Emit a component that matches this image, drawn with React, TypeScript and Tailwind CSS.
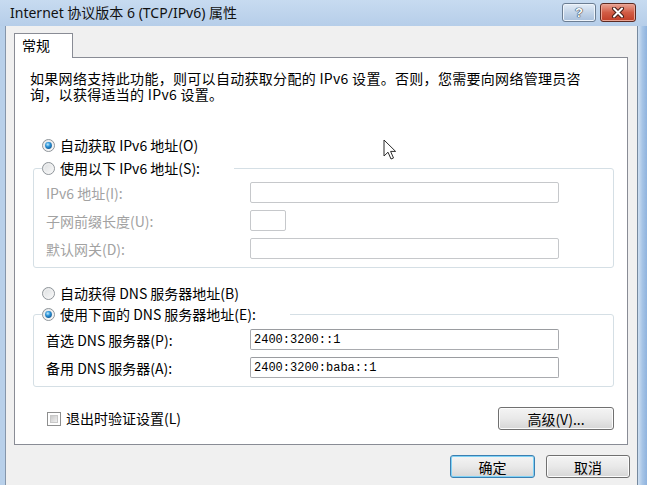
import React from "react";

function Radio({ checked }: { checked?: boolean }) {
  return (
    <svg width="13" height="13" viewBox="0 0 13 13" className="shrink-0">
      <defs>
        <linearGradient id="radio-bg" x1="0" y1="0" x2="1" y2="1">
          <stop offset="0" stopColor="#d9dcde" />
          <stop offset="1" stopColor="#fbfbfb" />
        </linearGradient>
        <radialGradient id="radio-dot" cx="0.4" cy="0.35" r="0.75">
          <stop offset="0" stopColor="#c4ecfd" />
          <stop offset="0.45" stopColor="#2a93d8" />
          <stop offset="1" stopColor="#0d4f8a" />
        </radialGradient>
      </defs>
      <circle cx="6.5" cy="6.5" r="6" fill="url(#radio-bg)" stroke="#8e9499" />
      <circle cx="6.5" cy="6.5" r="4.6" fill="none" stroke="#f4f4f4" strokeWidth="0.8" />
      {checked && <circle cx="6.5" cy="6.5" r="3.4" fill="url(#radio-dot)" />}
    </svg>
  );
}

function Checkbox() {
  return (
    <div className="w-[14px] h-[14px] shrink-0 border border-[#8e8f8f] bg-white p-[2px]">
      <div className="w-full h-full border border-[#c8c8c8] bg-gradient-to-br from-[#cbcbcb] to-[#efefef]" />
    </div>
  );
}

function WinButton({ label, primary, className }: { label: string; primary?: boolean; className?: string }) {
  return (
    <div
      className={
        "h-[23px] flex items-center justify-center rounded-[3px] text-[14px] leading-none text-black bg-gradient-to-b from-[#f4f4f4] via-[#e9e9e9] to-[#d6d6d6] " +
        (primary
          ? "border border-[#3c7fb1] shadow-[inset_0_0_0_1px_#7fd2f6] "
          : "border border-[#707070] shadow-[inset_0_0_0_1px_#fcfcfc] ") +
        (className ?? "")
      }
    >
      {label}
    </div>
  );
}

function Field({ label, value, disabled }: { label: string; value?: string; disabled?: boolean }) {
  return (
    <div className="flex items-center h-[21px]">
      <span className={"w-[204px] text-[14px] leading-[16px] " + (disabled ? "text-[#a2a2a2]" : "text-black")}>
        {label}
      </span>
      <div
        className={
          "w-[309px] h-[21px] rounded-[2px] bg-white flex items-center pl-[3px] border " +
          (disabled ? "border-[#c6c8cb]" : "border-[#a9abaf] border-t-[#9a9ca0]")
        }
      >
        {value && (
          <span className="text-[12px] text-black [font-family:'Liberation_Mono',monospace]">{value}</span>
        )}
      </div>
    </div>
  );
}

function ShortField({ label }: { label: string }) {
  return (
    <div className="flex items-center h-[21px]">
      <span className="w-[204px] text-[14px] leading-[16px] text-[#a2a2a2]">{label}</span>
      <div className="w-[36px] h-[21px] rounded-[2px] bg-white border border-[#c6c8cb]" />
    </div>
  );
}

export default function App() {
  return (
    <div className="relative w-[647px] h-[485px] overflow-hidden bg-[#f0f0f0] flex flex-col [font-family:'Noto_Sans_CJK_SC',sans-serif]">
      {/* title bar */}
      <div className="h-[26px] shrink-0 flex justify-between bg-gradient-to-b from-[#c7dbf0] to-[#b6cee9] pl-[10px] pr-[11px]">
        <span className="self-center text-[14px] leading-none text-[#111] [font-family:'Noto_Sans','Noto_Sans_CJK_SC',sans-serif]">
          Internet 协议版本 6 (TCP/IPv6) 属性
        </span>
        <div className="flex gap-[4px] mt-[3px]">
          <div className="w-[34px] h-[19px] rounded-[3px] border border-[#6b7d92] bg-gradient-to-b from-[#e4edf7] via-[#c3d4e8] to-[#a9c0dc] flex items-center justify-center shadow-[inset_0_0_0_1px_#eef4fb]">
            <span className="text-[13px] font-bold leading-none text-white [font-family:'Liberation_Sans',sans-serif] [text-shadow:0_0_1px_#2a3a4c,0_0_1px_#2a3a4c,0_0_1px_#2a3a4c]">
              ?
            </span>
          </div>
          <div className="w-[36px] h-[19px] rounded-[3px] border border-[#5c2a22] bg-gradient-to-b from-[#e8a395] via-[#d25c45] to-[#c13d26] flex items-center justify-center shadow-[inset_0_0_0_1px_#eba595]">
            <svg width="14" height="11" viewBox="0 0 14 11">
              <path d="M3 1.5 L11 9.5 M11 1.5 L3 9.5" stroke="#4a2019" strokeWidth="4" strokeLinecap="round" />
              <path d="M3 1.5 L11 9.5 M11 1.5 L3 9.5" stroke="#ffffff" strokeWidth="2" strokeLinecap="round" />
            </svg>
          </div>
        </div>
      </div>

      <div className="flex-1 flex">
        {/* left frame */}
        <div className="w-[6px] bg-[#b8d0ea] border-r border-[#8596ab]" />

        <div className="flex-1 flex flex-col pt-[7px] pl-[8px] pr-[9px]">
          {/* tab strip */}
          <div className="flex">
            <div className="relative z-10 -mb-px w-[59px] h-[25px] bg-white border border-b-0 border-[#898c95] pl-[7px] pt-[3px] text-[14px] leading-[16px] text-black">
              常规
            </div>
          </div>

          {/* tab page */}
          <div className="h-[388px] border border-[#898c95] bg-white flex flex-col">
            <div className="mt-[12px] ml-[15px] text-[14px] tracking-[0.3px] text-black flex flex-col">
              <span className="h-[16px] leading-[16px]">
                如果网络支持此功能，则可以自动获取分配的 IPv6 设置。否则，您需要向网络管理员咨
              </span>
              <span className="h-[16px] leading-[16px]">询，以获得适当的 IPv6 设置。</span>
            </div>

            <div className="mt-[33px] ml-[27px] h-[20px] flex items-center gap-[5px] text-[14px] text-black">
              <Radio checked />
              <span>自动获取 IPv6 地址(O)</span>
            </div>

            <fieldset className="mt-[3px] ml-[18px] w-[581px] border border-[#d5dfe5] rounded-[3px] pl-[8px]">
              <legend className="h-[20px] flex items-center gap-[5px] pr-[34px] text-[14px] text-black">
                <Radio />
                <span>使用以下 IPv6 地址(S):</span>
              </legend>
              <div className="flex flex-col gap-[7px] pt-[4px] pb-[8px] pl-[4px]">
                <Field label="IPv6 地址(I):" disabled />
                <ShortField label="子网前缀长度(U):" />
                <Field label="默认网关(D):" disabled />
              </div>
            </fieldset>

            <div className="mt-[15px] ml-[27px] h-[20px] flex items-center gap-[5px] text-[14px] text-black">
              <Radio />
              <span>自动获得 DNS 服务器地址(B)</span>
            </div>

            <fieldset className="mt-[1px] ml-[18px] w-[581px] border border-[#d5dfe5] rounded-[3px] pl-[8px]">
              <legend className="h-[20px] flex items-center gap-[5px] pr-[34px] text-[14px] text-black">
                <Radio checked />
                <span>使用下面的 DNS 服务器地址(E):</span>
              </legend>
              <div className="flex flex-col gap-[7px] pt-[5px] pb-[8px] pl-[4px]">
                <Field label="首选 DNS 服务器(P):" value="2400:3200::1" />
                <Field label="备用 DNS 服务器(A):" value="2400:3200:baba::1" />
              </div>
            </fieldset>

            <div className="mt-[20px] ml-[18px] w-[581px] flex items-center justify-between">
              <div className="pl-[14px] flex items-center gap-[5px] text-[14px] text-black">
                <Checkbox />
                <span>退出时验证设置(L)</span>
              </div>
              <WinButton label="高级(V)..." className="w-[116px]" />
            </div>
          </div>

          {/* dialog buttons */}
          <div className="mt-[10px] -mr-[2px] flex justify-end gap-[11px]">
            <WinButton label="确定" primary className="w-[85px]" />
            <WinButton label="取消" className="w-[84px]" />
          </div>
        </div>

        {/* right frame */}
        <div className="w-[10px] border-l border-[#76899e] bg-gradient-to-r from-[#cfe0f2] via-[#a6c4e6] to-[#8fb3de]" />
      </div>

      {/* mouse pointer */}
      <svg className="absolute left-[383px] top-[139px]" width="14" height="22" viewBox="0 0 14 22">
        <path
          d="M1 1 L1 17 L5 13.2 L8 20 L10.5 19 L7.6 12.4 L12.6 12.4 Z"
          fill="#ffffff"
          stroke="#2b2b2b"
          strokeWidth="1"
          strokeLinejoin="round"
        />
      </svg>
    </div>
  );
}
